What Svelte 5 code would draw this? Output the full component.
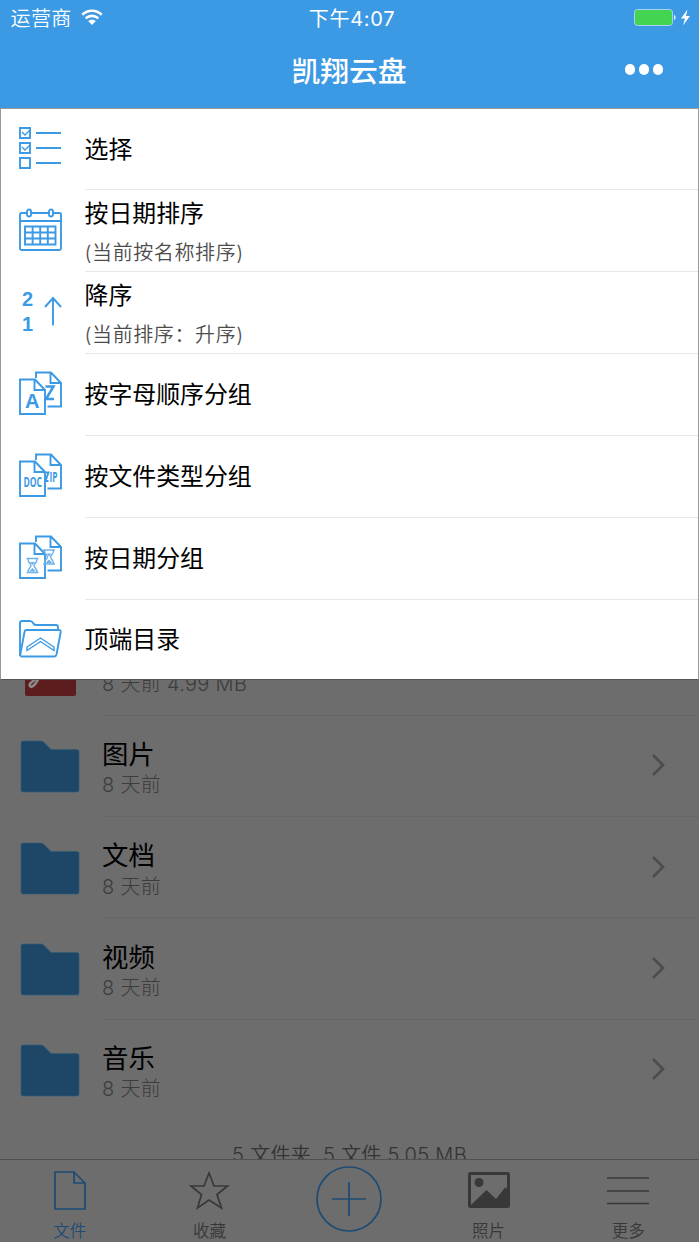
<script lang="ts">
	interface MenuItem {
		icon: string;
		title: string;
		note?: string;
	}

	const menu: MenuItem[] = [
		{ icon: 'select', title: '选择' },
		{ icon: 'calendar', title: '按日期排序', note: '(当前按名称排序)' },
		{ icon: 'order', title: '降序', note: '(当前排序：升序)' },
		{ icon: 'alpha', title: '按字母顺序分组' },
		{ icon: 'type', title: '按文件类型分组' },
		{ icon: 'date', title: '按日期分组' },
		{ icon: 'top', title: '顶端目录' }
	];

	const folders = ['图片', '文档', '视频', '音乐'];

	const tabs = [
		{ id: 'files', label: '文件' },
		{ id: 'favorites', label: '收藏' },
		{ id: 'add', label: '' },
		{ id: 'photos', label: '照片' },
		{ id: 'more', label: '更多' }
	];

	let active = $state('files');
</script>

{#snippet hourglass()}
	<path d="M0 0h12M0 14h12M1.500 .5c0 4 3 4.500 3 6.500s-3 3-3 6.500M10.500 .5c0 4-3 4.500-3 6.500s3 3 3 6.500" />
	<path d="M3.500 3.500h5l-2.500 3zM2.500 13l3.500-3.500 3.500 3.500z" fill="#6cb2eb" stroke="none" />
{/snippet}

<div class="screen">
	<header>
		<div class="status">
			<div class="carrier">
				<span>运营商</span>
				<svg width="22" height="16" viewBox="0 0 22 16" fill="none" stroke="#fff" stroke-width="2.6">
					<path d="M1.300 5.700a14 14 0 0 1 19.400 0M4.700 9.400a9 9 0 0 1 12.600 0" />
					<path d="M7.200 12.100a5.500 5.500 0 0 1 7.600 0L11 16z" fill="#fff" stroke="none" />
				</svg>
			</div>
			<span class="clock">下午4:07</span>
			<div class="battery">
				<svg width="58" height="18" viewBox="0 0 58 18">
					<rect x=".5" y=".5" width="38" height="16" rx="3" fill="#43d551" stroke="#a5d3f5" />
					<path d="M40 6c2.300.5 2.300 4.500 0 5z" fill="#d7ebfa" />
					<path d="M53.500 .5L47 9.500h4L49 16.500 56 7h-4z" fill="#fff" />
				</svg>
			</div>
		</div>
		<div class="navbar">
			<h1>凯翔云盘</h1>
			<button class="dots" aria-label="菜单"><i></i><i></i><i></i></button>
		</div>
	</header>

	<ul class="menu">
		{#each menu as item}
			<li>
				<svg class="icon {item.icon}" width="44" height="44" viewBox="0 0 44 44">
					{#if item.icon === 'select'}
						<path d="M2 2h10v10H2zM2 17h10v10H2zM2 32h10v10H2zM18 7h25M18 22h25M18 37h25" />
						<path class="thin" d="M4 6l3 3 5-5M4 21l3 3 5-5" />
					{:else if item.icon === 'calendar'}
						<path d="M9 5H3.500a1.500 1.500 0 0 0-1.500 1.500v34a1.500 1.500 0 0 0 1.500 1.500h38a1.500 1.500 0 0 0 1.500-1.500v-34a1.500 1.500 0 0 0-1.500-1.500h-6.500M13 5h18M2 13h41" />
						<rect x="9" y="1.500" width="4" height="7" rx="2" />
						<rect x="31" y="1.500" width="4" height="7" rx="2" />
						<path d="M7 18.500h30.500v18H7zM7 24.500h30.500M7 30.500h30.500M14.600 18.500v18M22.200 18.500v18M29.800 18.500v18" />
					{:else if item.icon === 'order'}
						<text x="4" y="16" font-size="20">2</text>
						<text x="4" y="40.500" font-size="20">1</text>
						<path d="M35 35.500V8M27 17l8-9 8 9" />
					{:else if item.icon === 'top'}
						<path d="M2 39V6q0-2 2-2h8q2 0 3 2 1 2 3 2h20q2 0 2 2v3" />
						<path d="M8.500 13h32q2.500 0 2.200 2l-4.200 22.500q-.5 2-2.500 2H4q-2 0-1.700-2L6.500 15q.300-2 2-2z" />
						<path class="thin" d="M9 30L22.500 21 36 30v3.500L22.500 24.500 9 33.500z" />
					{:else}
						<path d="M18 7V1.500H33L43 12v23.500H29.500M32.500 1.500V12H43" />
						<path d="M2 8.500h15L27 19v24H2zM16.500 8.500V19H27" />
						{#if item.icon === 'alpha'}
							<text x="7" y="36.500" font-size="20">A</text>
							<path class="bold" d="M27.500 15.500h8L28 28h8" />
						{:else if item.icon === 'type'}
							<text class="narrow" x="5.500" y="34" font-size="14" textLength="18.500" lengthAdjust="spacingAndGlyphs">DOC</text>
							<path d="M28 19.500h2.500L27.500 28h3" />
							<text class="narrow" x="31.500" y="29" font-size="14" textLength="8" lengthAdjust="spacingAndGlyphs">IP</text>
						{:else}
							<g class="pale" transform="translate(8.500 23.500)">{@render hourglass()}</g>
							<g class="pale" transform="translate(25 15)">{@render hourglass()}</g>
						{/if}
					{/if}
				</svg>
				<div class="item-text" class:noted={item.note}>
					<span class="title">{item.title}</span>
					{#if item.note}
						<span class="note">{item.note}</span>
					{/if}
				</div>
			</li>
		{/each}
	</ul>

	<main>
		<div class="row clipped">
			<svg class="pdf" width="60" height="54" viewBox="0 0 60 54">
				<path d="M5 0h51v51a2 2 0 0 1-2 2H7a2 2 0 0 1-2-2z" fill="#5d1d1e" />
				<path d="M10 43c-2-3 5-5 10-11-3 8-8 14-10 11z" fill="none" stroke="#8b8b8b" stroke-width="2.500" />
			</svg>
			<div class="row-text">
				<span class="meta">8 天前 4.99 MB</span>
			</div>
		</div>
		{#each folders as folder, i}
			<div class="row">
				<svg width="60" height="54" viewBox="0 0 60 54">
					<path
						d="M3 1h18q1.500 0 2.500 1l7.500 7.500h26q2 0 2 2v38.500q0 2-2 2H3q-2 0-2-2V3q0-2 2-2z"
						fill="#1e4666"
						stroke="#315a78"
						stroke-width=".7"
					/>
				</svg>
				<div class="row-text" class:last={i === folders.length - 1}>
					<span class="name">{folder}</span>
					<span class="meta">8 天前</span>
					<svg class="chevron" width="14" height="24" viewBox="0 0 14 24">
						<path d="M2 2l10 10L2 22" fill="none" stroke="#4d4d50" stroke-width="2.800" />
					</svg>
				</div>
			</div>
		{/each}
		<p class="summary">5 文件夹&nbsp; 5 文件 5.05 MB</p>
	</main>

	<nav>
		{#each tabs as tab}
			<button class="tab {tab.id}" class:active={active === tab.id} onclick={() => (active = tab.id)} aria-label={tab.id}>
				{#if tab.id === 'files'}
					<svg width="44" height="44" viewBox="0 0 44 44">
						<path d="M7 3h19l11 11v26H7zM26 3v11h11" />
					</svg>
				{:else if tab.id === 'favorites'}
					<svg width="44" height="44" viewBox="0 0 44 44">
						<path d="M22 4l5 13H40.500L30 25.500 34.500 39 22 31 10.500 39l4-13.500L4 17h13z" />
					</svg>
				{:else if tab.id === 'add'}
					<svg width="68" height="68" viewBox="0 0 68 68">
						<circle cx="34" cy="34" r="32" />
						<path d="M34 17v34M17 34h34" />
					</svg>
				{:else if tab.id === 'photos'}
					<svg width="44" height="44" viewBox="0 0 44 44">
						<rect x="2.500" y="4.500" width="39" height="33" rx="1" stroke-width="3" />
						<circle class="solid" cx="12" cy="13.500" r="4.500" />
						<path class="solid" d="M3 37l4-4 12.500-12L29 30l9.500-12 3 4v16z" />
					</svg>
				{:else}
					<svg width="44" height="44" viewBox="0 0 44 44">
						<path d="M1 9h42M1 22h42M1 34.500h42" />
					</svg>
				{/if}
				{#if tab.label}
					<span>{tab.label}</span>
				{/if}
			</button>
		{/each}
	</nav>
</div>

<style>
	:global(body) {
		margin: 0;
	}

	.screen {
		width: 699px;
		height: 1242px;
		display: flex;
		flex-direction: column;
		overflow: hidden;
		background: #6d6d6d;
		font-family: Inter, 'Noto Sans CJK SC', sans-serif;
		color: #000;
	}

	button {
		border: 0;
		padding: 0;
		background: none;
		font: inherit;
		color: inherit;
	}

	/* Header */
	header {
		height: 108px;
		flex: none;
		background: #3c99e4;
		color: #fff;
	}

	.status {
		height: 35px;
		display: grid;
		grid-template-columns: 1fr auto 1fr;
		align-items: center;
		padding: 0 7px;
		font-size: 20px;
		line-height: 34px;
	}

	.carrier {
		display: flex;
		align-items: center;
		gap: 9px;
		padding-left: 3.500px;
		font-weight: 350;
		letter-spacing: 0.4px;
	}

	.carrier span {
		padding-top: 2px;
	}

	.carrier svg {
		margin-bottom: 2px;
	}

	.clock {
		padding: 1px 0 0 5px;
		letter-spacing: 0.7px;
	}

	.battery {
		display: flex;
		justify-content: flex-end;
	}

	.navbar {
		height: 73px;
		display: grid;
		grid-template-columns: 1fr auto 1fr;
		align-items: center;
	}

	h1 {
		grid-column: 2;
		margin: 0;
		padding-right: 1px;
		font-size: 28.800px;
		font-weight: 500;
		line-height: 73px;
	}

	.dots {
		justify-self: end;
		display: flex;
		gap: 3.500px;
		margin: 0 36px 4px 0;
	}

	.dots i {
		width: 10.500px;
		height: 10.500px;
		border-radius: 50%;
		background: #fff;
	}

	/* Menu */
	.menu {
		height: 572px;
		flex: none;
		box-sizing: border-box;
		display: grid;
		grid-template-rows: 81px repeat(5, 82px) 1fr;
		margin: 0;
		padding: 0;
		list-style: none;
		background: #fff;
		border: 1px solid #999;
		border-bottom-color: #555;
	}

	.menu li {
		display: flex;
		align-items: center;
		padding-left: 17px;
		gap: 23px;
	}

	.icon {
		flex: none;
		margin: 0 0 3px -0.5px;
		fill: none;
		stroke: #3c9ae5;
		stroke-width: 1.900;
		overflow: visible;
	}

	.icon.alpha,
	.icon.type,
	.icon.date {
		margin-bottom: 5px;
	}

	.icon.top {
		margin-bottom: 1px;
	}

	.icon text {
		fill: #3c9ae5;
		stroke: none;
		font-family: 'Liberation Sans', sans-serif;
		font-weight: 700;
	}

	.icon .narrow {
		font-family: 'Open Sans', sans-serif;
	}

	.icon .thin {
		stroke-width: 1.400;
	}

	.icon .bold {
		stroke-width: 2.500;
	}

	.icon .pale {
		stroke-width: 1.400;
		stroke: #6cb2eb;
	}

	.item-text {
		flex: 1;
		height: 100%;
		box-sizing: border-box;
		display: flex;
		flex-direction: column;
		justify-content: center;
		padding-top: 1px;
		border-bottom: 1px solid #e7e7e9;
	}

	.item-text.noted {
		justify-content: flex-start;
		padding-top: 4px;
	}

	li:last-child .item-text {
		border-bottom: 0;
	}

	.title {
		font-size: 23.900px;
		line-height: 40px;
	}

	.note {
		font-size: 20px;
		font-weight: 350;
		line-height: 39px;
		letter-spacing: 0.6px;
		color: #4c4c4c;
	}

	/* File list */
	main {
		flex: 1;
		min-height: 0;
		overflow: hidden;
	}

	.row {
		height: 101.300px;
		display: flex;
		align-items: center;
		gap: 22px;
		padding-left: 20px;
	}

	.row.clipped {
		margin-top: -65.500px;
	}

	.row > svg {
		margin-top: 2px;
	}

	.row > .pdf {
		margin-top: 9px;
	}

	.row-text {
		flex: 1;
		height: 100%;
		box-sizing: border-box;
		display: grid;
		grid-template-columns: 1fr auto;
		grid-template-rows: 36px 26px;
		align-content: center;
		align-items: center;
		padding: 3px 34px 0 0;
		border-bottom: 1px solid #666;
	}

	.row-text.last {
		border-bottom-color: transparent;
	}

	.name {
		font-size: 26.400px;
		line-height: 35px;
	}

	.meta {
		grid-row: 2;
		font-size: 20px;
		font-weight: 300;
		line-height: 26px;
		letter-spacing: 0.3px;
		color: #3c3c3c;
	}

	.chevron {
		grid-column: 2;
		grid-row: 1 / 3;
		margin-bottom: 4px;
	}

	.summary {
		margin: 0;
		font-size: 20px;
		font-weight: 350;
		line-height: 69px;
		text-align: center;
		letter-spacing: 0.3px;
		color: #333;
	}

	/* Tab bar */
	nav {
		height: 83px;
		flex: none;
		box-sizing: border-box;
		display: grid;
		grid-template-columns: repeat(5, 1fr);
		padding-right: 1px;
		border-top: 1px solid #505050;
		color: #383838;
	}

	.tab {
		display: flex;
		flex-direction: column;
		align-items: center;
		padding-top: 9px;
		font-size: 16.500px;
		font-weight: 350;
		line-height: 36px;
	}

	.tab svg {
		flex: none;
		fill: none;
		stroke: currentColor;
		stroke-width: 1.700;
	}

	.tab.active,
	.tab.add {
		color: #1d4b73;
	}

	.tab.add {
		padding-top: 5px;
	}

	.tab .solid {
		fill: currentColor;
		stroke: none;
	}
</style>
